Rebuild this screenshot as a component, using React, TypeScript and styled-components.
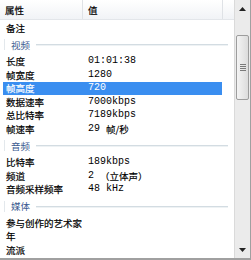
import styled, { createGlobalStyle } from "styled-components";

const GlobalStyle = createGlobalStyle`
  html, body { margin: 0; padding: 0; background: #ffffff; }
  body { font-family: "Noto Sans CJK SC", "Liberation Sans", sans-serif; }
`;

type Item =
  | { kind: "row"; name: string; value?: string; cjk?: string; selected?: boolean }
  | { kind: "group"; name: string };

const items: Item[] = [
  { kind: "row", name: "备注" },
  { kind: "group", name: "视频" },
  { kind: "row", name: "长度", value: "01:01:38" },
  { kind: "row", name: "帧宽度", value: "1280" },
  { kind: "row", name: "帧高度", value: "720", selected: true },
  { kind: "row", name: "数据速率", value: "7000kbps" },
  { kind: "row", name: "总比特率", value: "7189kbps" },
  { kind: "row", name: "帧速率", value: "29 ", cjk: "帧/秒" },
  { kind: "group", name: "音频" },
  { kind: "row", name: "比特率", value: "189kbps" },
  { kind: "row", name: "频道", value: "2 ", cjk: "（立体声）" },
  { kind: "row", name: "音频采样频率", value: "48 kHz" },
  { kind: "group", name: "媒体" },
  { kind: "row", name: "参与创作的艺术家" },
  { kind: "row", name: "年" },
  { kind: "row", name: "流派" },
];

const Frame = styled.div`
  width: 251px;
  height: 260px;
  box-sizing: border-box;
  display: flex;
  border-right: 1px solid #a0a0a0;
  border-bottom: 2px solid #a0a0a0;
  overflow: hidden;
`;

const List = styled.div`
  flex: 1;
  display: flex;
  flex-direction: column;
  overflow: hidden;
`;

const Header = styled.div`
  height: 19px;
  flex: none;
  display: flex;
  background: linear-gradient(#ffffff, #f1f3f6);
  border-bottom: 1px solid #e3e6ea;
  font-size: 9.5px;
  color: #000;
  -webkit-text-stroke: 0.2px #000;
`;

const HeaderCell = styled.div<{ $w: number }>`
  width: ${(p) => p.$w}px;
  flex: none;
  box-sizing: border-box;
  padding-left: 5px;
  display: flex;
  align-items: center;
  border-right: 1px solid #dfe2e6;
`;

const Spacer = styled.div`
  height: 1px;
  flex: none;
`;

const Row = styled.div<{ $selected?: boolean }>`
  height: 13.5px;
  width: 219px;
  margin-left: 3px;
  display: flex;
  align-items: center;
  font-size: 9.5px;
  line-height: 12px;
  color: ${(p) => (p.$selected ? "#ffffff" : "#000000")};
  background: ${(p) => (p.$selected ? "#3a8ef0" : "transparent")};
  white-space: nowrap;
`;

const Name = styled.div`
  width: 82px;
  flex: none;
  padding-left: 3px;
  -webkit-text-stroke: 0.2px currentColor;
`;

const Value = styled.div`
  font-family: "Liberation Mono", monospace;
  font-size: 10px;
  display: flex;
  align-items: center;
  white-space: pre;
`;

const Cjk = styled.span`
  font-family: "Noto Sans CJK SC", sans-serif;
  font-size: 9.5px;
  -webkit-text-stroke: 0.15px currentColor;
`;

const Group = styled.div`
  height: 20px;
  flex: none;
  display: flex;
  align-items: center;
  gap: 6px;
  padding-left: 4px;
  width: 228px;
  box-sizing: border-box;
  font-size: 9.5px;
  color: #3a5a90;
`;

const Tick = styled.div`
  width: 1px;
  height: 11px;
  background: #e3e8ec;
`;

const GroupLine = styled.div`
  flex: 1;
  height: 1px;
  background: #d3dce2;
  box-shadow: 0 1px 0 #eef2f4;
`;

const Scrollbar = styled.div`
  width: 15px;
  flex: none;
  display: flex;
  flex-direction: column;
  background: #ebebeb;
  border-left: 1px solid #dadada;
`;

const Arrow = styled.div`
  height: 17px;
  flex: none;
  display: flex;
  align-items: center;
  justify-content: center;
`;

const Track = styled.div`
  flex: 1;
  padding-top: 18px;
  display: flex;
  flex-direction: column;
  align-items: center;
`;

const Thumb = styled.div`
  width: 13px;
  height: 65px;
  box-sizing: border-box;
  border: 1px solid #9d9d9d;
  border-radius: 2px;
  background: linear-gradient(90deg, #f4f4f4, #dcdcdc);
  display: flex;
  align-items: center;
  justify-content: center;
`;

const Grip = styled.div`
  width: 6px;
  height: 7px;
  background: repeating-linear-gradient(#7a7a7a 0 1px, transparent 1px 2px);
`;

function ArrowIcon({ down }: { down?: boolean }) {
  return (
    <svg width="7" height="4" viewBox="0 0 7 4">
      <path d={down ? "M0 0h7L3.5 4z" : "M3.5 0L7 4H0z"} fill="#222" />
    </svg>
  );
}

export default function App() {
  return (
    <>
      <GlobalStyle />
      <Frame>
        <List>
          <Header>
            <HeaderCell $w={83}>属性</HeaderCell>
            <HeaderCell $w={140}>值</HeaderCell>
          </Header>
          <Spacer />
          {items.map((it, i) =>
            it.kind === "group" ? (
              <Group key={i}>
                <Tick />
                <span>{it.name}</span>
                <GroupLine />
              </Group>
            ) : (
              <Row key={i} $selected={it.selected}>
                <Name>{it.name}</Name>
                {it.value && (
                  <Value>
                    {it.value}
                    {it.cjk && <Cjk>{it.cjk}</Cjk>}
                  </Value>
                )}
              </Row>
            )
          )}
        </List>
        <Scrollbar>
          <Arrow>
            <ArrowIcon />
          </Arrow>
          <Track>
            <Thumb>
              <Grip />
            </Thumb>
          </Track>
          <Arrow>
            <ArrowIcon down />
          </Arrow>
        </Scrollbar>
      </Frame>
    </>
  );
}
